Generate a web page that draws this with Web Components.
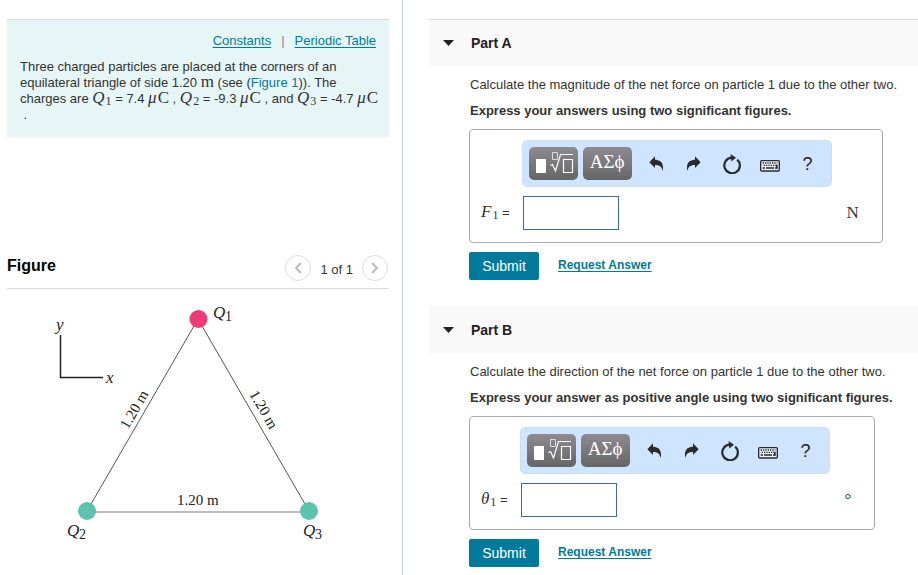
<!DOCTYPE html>
<html lang="en">
<head>
<meta charset="utf-8">
<title>Three charged particles</title>
<style>
  body { margin: 0; background: #fff; color: #333; font: 13px/16px "Liberation Sans", Arial, sans-serif; }
</style>
</head>
<body>
<problem-page>
  <problem-intro slot="side">
    <span>Three charged particles are placed at the corners of an</span> <span>equilateral triangle of side 1.20</span> <math-text unit="m"></math-text> <span>(see (</span><figure-link>Figure 1</figure-link><span>)).</span> <span>The</span> <span>charges are</span> <math-text var="Q" sub="1"></math-text> <span>= 7.4</span> <math-text mu unit="C"></math-text> <span>,</span> <math-text var="Q" sub="2"></math-text> <span>= -9.3</span> <math-text mu unit="C"></math-text> <span>, and</span> <math-text var="Q" sub="3"></math-text> <span>= -4.7</span> <math-text mu unit="C"></math-text> <br><span>&nbsp;.</span>
  </problem-intro>
  <figure-panel slot="side"><triangle-figure></triangle-figure></figure-panel>
  <problem-part label="Part A" ruled>
    Calculate the magnitude of the net force on particle 1 due to the other two.
    <span slot="hint">Express your answers using two significant figures.</span>
    <answer-box slot="answer" var="F" sub="1" unit="N"></answer-box>
  </problem-part>
  <problem-part label="Part B">
    Calculate the direction of the net force on particle 1 due to the other two.
    <span slot="hint">Express your answer as positive angle using two significant figures.</span>
    <answer-box slot="answer" var="θ" sub="1" unit="°"></answer-box>
  </problem-part>
</problem-page>

<script>
const define = (name, render) => customElements.define(name, class extends HTMLElement {
  connectedCallback() {
    if (this.shadowRoot) return;
    const t = document.createElement('template');
    t.innerHTML = render(this).trim();
    this.attachShadow({ mode: 'open' }).append(t.content.cloneNode(true));
  }
});

define('problem-page', () => `
  <style>
    :host { display: grid; grid-template-columns: 403fr 515fr; min-height: 100vh; }
    aside { box-sizing: border-box; min-width: 0; padding: 19px 13px 0 7px; border-right: 1px solid #c3cdd5; }
    main { min-width: 0; padding: 19px 0 0 26px; }
  </style>
  <aside><slot name="side"></slot></aside>
  <main><slot></slot></main>`);

define('math-text', el => `
  <style>
    :host { display: inline; font: 17px/0 "Liberation Serif", "Times New Roman", serif; white-space: nowrap; }
    i { padding-right: 1px; }
    sub { font-size: 12px; line-height: 0; vertical-align: -2px; }
  </style>${el.hasAttribute('var') ? `<i>${el.getAttribute('var')}</i><sub>${el.getAttribute('sub')}</sub>` : ''}${el.hasAttribute('mu') ? '<i>μ</i>' : ''}<span>${el.getAttribute('unit') || ''}</span>`);

define('figure-link', () => `
  <style>a { color: #007a9c; text-decoration: none; }</style><a href="#figure"><slot></slot></a>`);

define('problem-intro', () => `
  <style>
    :host { display: block; box-sizing: border-box; min-height: 118px; padding: 13px 8px 13px 13px;
      background: #e6f6f7; border-top: 1px solid #d3dcdd; }
    nav { display: flex; justify-content: flex-end; gap: 10px; padding: 0 5px 10px 0; color: #888; }
    a { color: #007a9c; text-underline-offset: 2px; }
    p { margin: 0; }
  </style>
  <nav><a href="#constants">Constants</a><span>|</span><a href="#periodic">Periodic Table</a></nav>
  <p><slot></slot></p>`);

define('figure-panel', () => `
  <style>
    :host { display: block; margin-top: 118px; }
    header { display: flex; align-items: center; gap: 9px; padding: 0 1px 7px 0; border-bottom: 1px solid #d5dbdb; }
    h2 { flex: 1; margin: 0; padding-bottom: 5px; font-size: 16px; line-height: 20px; color: #000; }
    button { width: 26px; height: 26px; padding: 0; display: grid; place-items: center;
      border: 1px solid #ddd; border-radius: 50%; background: #fff; }
    svg { width: 8px; height: 12px; fill: none; stroke: #bbb; stroke-width: 2; }
    span { padding-top: 4px; }
  </style>
  <header>
    <h2>Figure</h2>
    <button aria-label="Previous figure"><svg viewBox="0 0 8 12"><path d="M7 1 2 6l5 5"/></svg></button>
    <span>1 of 1</span>
    <button aria-label="Next figure"><svg viewBox="0 0 8 12"><path d="M1 1l5 5-5 5"/></svg></button>
  </header>
  <slot></slot>`);

define('triangle-figure', () => `
  <style>
    :host { display: block; }
    svg { display: block; width: 100%; font: 15px "Liberation Serif", "Times New Roman", serif; fill: #222; }
    .var { font-size: 17px; }
    .i { font-style: italic; }
    .n { font-size: 14px; }
  </style>
  <svg viewBox="7 289 382 280" role="img" aria-label="Equilateral triangle of three charges">
    <path d="M60.500 335V377.500H103" fill="none" stroke="#222" stroke-width="1.500"/>
    <path d="M198 319 87 511M198 319 309 511" fill="none" stroke="#555" stroke-width="1"/>
    <path d="M87 512H309" stroke="#bbb" stroke-width="2"/>
    <circle cx="198.500" cy="319" r="9" fill="#ee3a76"/>
    <circle cx="87" cy="511" r="9" fill="#5cc3ae"/>
    <circle cx="309" cy="511" r="9" fill="#5cc3ae"/>
    <text class="var i" x="56" y="330">y</text>
    <text class="var i" x="106" y="383">x</text>
    <text class="var i" x="213" y="318">Q</text><text class="n" x="225" y="321">1</text>
    <text class="var i" x="67" y="536">Q</text><text class="n" x="79" y="539">2</text>
    <text class="var i" x="303" y="536">Q</text><text class="n" x="315" y="539">3</text>
    <text x="177" y="505">1.20 m</text>
    <text transform="translate(128 430) rotate(-60)">1.20 m</text>
    <text transform="translate(249 394) rotate(60)">1.20 m</text>
  </svg>`);

define('problem-part', el => `
  <style>
    :host { display: block; margin-bottom: 26px; }
    h2 { box-sizing: border-box; display: flex; height: 47px; margin: 0; background: #f9f9f9; border-top: 1px solid ${el.hasAttribute('ruled') ? '#d9dcdc' : '#f9f9f9'}; }
    h2 button { display: flex; align-items: center; gap: 17px; padding: 0 14px; border: 0; background: none;
      font: bold 14px/18px "Liberation Sans", Arial, sans-serif; color: #222; }
    h2 svg { width: 11px; height: 6px; fill: #222; }
    section { display: flex; flex-direction: column; align-items: flex-start; gap: 10px; padding: 11px 0 0 40px; }
    p { margin: 0; padding-left: 1px; }
    .hint { font-weight: bold; }
    footer { display: flex; align-items: center; gap: 19px; padding: 9px 0 0 40px; }
    .submit { width: 70px; height: 28px; padding: 0; border: 0; border-radius: 2px; background: #007a9c; color: #fff;
      font: 14px/16px "Liberation Sans", Arial, sans-serif; }
    a { padding-bottom: 2px; color: #007a9c; font-size: 12px; font-weight: bold; text-underline-offset: 2px; }
  </style>
  <h2><button aria-expanded="true"><svg viewBox="0 0 11 6"><path d="M0 0h11L5.500 6z"/></svg>${el.getAttribute('label')}</button></h2>
  <section>
    <p><slot></slot></p>
    <p class="hint"><slot name="hint"></slot></p>
    <slot name="answer"></slot>
  </section>
  <footer><button class="submit">Submit</button><a href="#answer">Request Answer</a></footer>`);

define('answer-box', el => `
  <style>
    :host { display: grid; grid-template-columns: auto auto auto; align-items: center; column-gap: 12px; row-gap: 9px;
      padding: 10px 23px 12px 11px; border: 1px solid #aaa; border-radius: 4px; }
    math-toolbar { grid-column: 2; }
    label { grid-column: 1; grid-row: 2; white-space: nowrap; }
    input { grid-column: 2; grid-row: 2; box-sizing: border-box; width: 96px; height: 34px; margin: 0 1px; border: 1px solid #3c6aa5;
      background: #fff; font: inherit; padding: 0 6px; }
    .unit { grid-row: 2; grid-column: 3; padding-left: 3px; line-height: 20px; }
  </style>
  <math-toolbar></math-toolbar>
  <label for="value"><math-text var="${el.getAttribute('var')}" sub="${el.getAttribute('sub')}"></math-text>&nbsp;=</label>
  <input id="value" type="text">
  <math-text class="unit" unit="${el.getAttribute('unit')}"></math-text>`);

define('math-toolbar', () => `
  <style>
    :host { display: flex; align-items: center; box-sizing: border-box; width: 310px; height: 47px; padding: 0 4px 0 7px;
      border-radius: 6px; background: #cfe5ff; box-shadow: inset 0 0 0 1px #cbdef3; }
    button { display: grid; place-items: center; box-sizing: border-box; width: 38px; height: 33px; padding: 0; border: 0; background: none; color: #222;
      font: 18px/20px "Liberation Sans", Arial, sans-serif; }
    .key { width: 49px; margin-right: 5px; border-radius: 5px; background: linear-gradient(#8d8b90, #666); color: #fff;
      font: 19px/24px "Liberation Serif", "Times New Roman", serif; }
    .symbols { padding-bottom: 3px; }
    svg { display: block; fill: #2b2b2b; }
  </style>
  <button class="key" aria-label="Templates"><svg width="49" height="33" viewBox="0 0 49 33" fill="none">
    <path d="M7 12h10v14H7z" fill="#fff"/>
    <path d="M34.500 12.500h9v13h-9zM21.500 18.500 23.500 17.500 26.500 24 31.500 7.500H44" fill="none" stroke="#fff" stroke-width="1.200"/>
    <path d="M23.500 5.500h5v7h-5z" fill="none" stroke="#ddd"/></svg></button>
  <button class="key symbols" aria-label="Symbols">ΑΣϕ</button>
  <button aria-label="Undo"><svg width="14" height="15" viewBox="0 0 42 45"><path d="M1 19 18 1V11C33 11 46 20 41 45 38 31 31 27 18 27V36z"/></svg></button>
  <button aria-label="Redo"><svg width="14" height="15" viewBox="0 0 42 45"><path d="M41 19 24 1V11C9 11-4 20 1 45 4 31 11 27 24 27V36z"/></svg></button>
  <button aria-label="Reset"><svg width="18" height="20" viewBox="0 0 48 54"><path d="M38 15A21 21 0 1 1 22 10" fill="none" stroke="#2b2b2b" stroke-width="6"/><path d="M20 0 35 10 22 20z"/></svg></button>
  <button aria-label="Keyboard"><svg width="20" height="16" viewBox="0 0 60 48"><rect x="2" y="14" width="56" height="31" rx="3" fill="#e6f0fb" stroke="#2b2b2b" stroke-width="4"/><path d="M8 21H52M11 28H49" fill="none" stroke="#2b2b2b" stroke-width="4" stroke-dasharray="4 3"/><path d="M8 36H15M18 36H42M45 36H52" fill="none" stroke="#2b2b2b" stroke-width="5"/><path d="M48 26H53V38H48z"/></svg></button>
  <button aria-label="Help">?</button>`);
</script>
</body>
</html>
